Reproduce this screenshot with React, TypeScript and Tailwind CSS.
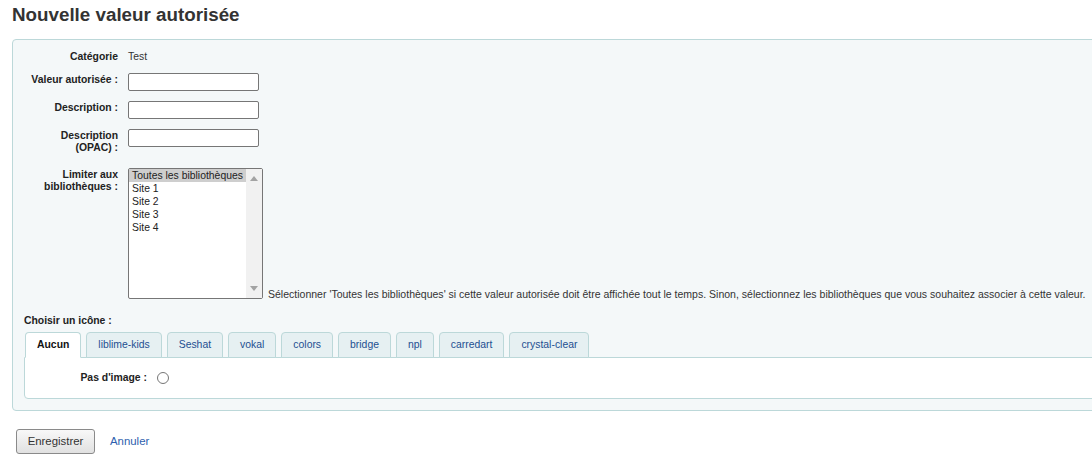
const libraries = ['Toutes les bibliothèques', 'Site 1', 'Site 2', 'Site 3', 'Site 4'];

const iconSets = ['Aucun', 'liblime-kids', 'Seshat', 'vokal', 'colors', 'bridge', 'npl', 'carredart', 'crystal-clear'];

function Label({ children }: { children: React.ReactNode }) {
  return (
    <label className="w-[94px] shrink-0 text-right font-bold text-[10.4px] leading-[12px] text-[#222] pt-[1px]">
      {children}
    </label>
  );
}

function TextInput() {
  return <input type="text" className="w-[131px] h-[18px] bg-white border border-[#767676] rounded-[2px] px-1 text-[10.4px] outline-none" />;
}

export default function App() {
  return (
    <div className="w-[1092px] h-[458px] overflow-hidden bg-white text-[#333]" style={{ fontFamily: '"Liberation Sans", Arial, sans-serif' }}>
      <div className="pl-[12px]">
        <h1 className="pt-[3px] text-[18.8px] leading-[23px] font-bold text-[#333]">Nouvelle valeur autorisée</h1>

        {/* Form fieldset */}
        <div className="mt-[13px] w-[1100px] bg-[#f4f8f9] border border-[#bcd8d9] rounded-[4px] px-[11px] pt-[10px] pb-[11px]">
          <div className="flex flex-col">
            <div className="flex gap-[10px]">
              <Label>Catégorie</Label>
              <span className="text-[10.4px] leading-[12px] pt-[1px] text-[#333]">Test</span>
            </div>

            <div className="flex gap-[10px] mt-[10px]">
              <Label>Valeur autorisée :</Label>
              <TextInput />
            </div>

            <div className="flex gap-[10px] mt-[10px]">
              <Label>Description :</Label>
              <TextInput />
            </div>

            <div className="flex gap-[10px] mt-[10px]">
              <Label>
                Description
                <br />
                (OPAC) :
              </Label>
              <TextInput />
            </div>

            <div className="flex gap-[10px] mt-[14px]">
              <Label>
                Limiter aux
                <br />
                bibliothèques :
              </Label>
              <div className="flex items-end">
                <div className="w-[135px] h-[131px] bg-white border border-[#767676] rounded-[2px] flex">
                  <div className="flex-1 flex flex-col">
                    {libraries.map((lib, i) => (
                      <div
                        key={lib}
                        className={`h-[13px] pl-[3px] text-[10.4px] leading-[13px] whitespace-nowrap text-[#222] ${i === 0 ? 'bg-[#cecece]' : ''}`}
                      >
                        {lib}
                      </div>
                    ))}
                  </div>
                  <div className="w-[16px] bg-[#f1f1f1] flex flex-col justify-between items-center py-[7px]">
                    <svg width="8" height="5" viewBox="0 0 8 5">
                      <path d="M4 0 L8 5 L0 5 Z" fill="#a3a3a3" />
                    </svg>
                    <svg width="8" height="5" viewBox="0 0 8 5">
                      <path d="M0 0 L8 0 L4 5 Z" fill="#a3a3a3" />
                    </svg>
                  </div>
                </div>
                <span className="ml-[5px] text-[10.52px] leading-[12px] text-[#333] whitespace-nowrap mb-[-1px]">
                  Sélectionner 'Toutes les bibliothèques' si cette valeur autorisée doit être affichée tout le temps. Sinon, sélectionnez les bibliothèques que vous souhaitez associer à cette valeur.
                </span>
              </div>
            </div>

            <div className="mt-[16px] font-bold text-[10.4px] leading-[12px] text-[#222]">Choisir un icône :</div>

            {/* Icon tabs */}
            <div className="mt-[5px]">
              <div className="flex gap-[5px] pl-[1px] relative z-10">
                {iconSets.map((set, i) => (
                  <div
                    key={set}
                    className={`h-[26px] px-[11px] flex items-center border border-[#bcd8d9] rounded-t-[4px] text-[10.4px] ${
                      i === 0 ? 'bg-white border-b-white font-bold text-[#111]' : 'bg-[#e6f0f2] border-b-[#bcd8d9] text-[#1d4f91]'
                    }`}
                  >
                    {set}
                  </div>
                ))}
              </div>
              <div className="-mt-[1px] h-[42px] bg-white border border-[#bcd8d9] rounded-b-[4px] flex items-center">
                <label className="w-[122px] text-right font-bold text-[10.4px] text-[#222]">Pas d'image :</label>
                <span className="ml-[10px] w-[12px] h-[12px] rounded-full border border-[#767676] bg-white" />
              </div>
            </div>
          </div>
        </div>

        {/* Actions */}
        <div className="mt-[18px] flex items-center">
          <button className="ml-[4px] w-[79px] h-[25px] border border-[#8a8a8a] rounded-[3px] bg-gradient-to-b from-[#f8f8f8] to-[#e1e1e1] text-[11.4px] text-[#333]">
            Enregistrer
          </button>
          <a href="#" className="ml-[15px] text-[11.4px] text-[#2e5fae]">Annuler</a>
        </div>
      </div>
    </div>
  );
}
